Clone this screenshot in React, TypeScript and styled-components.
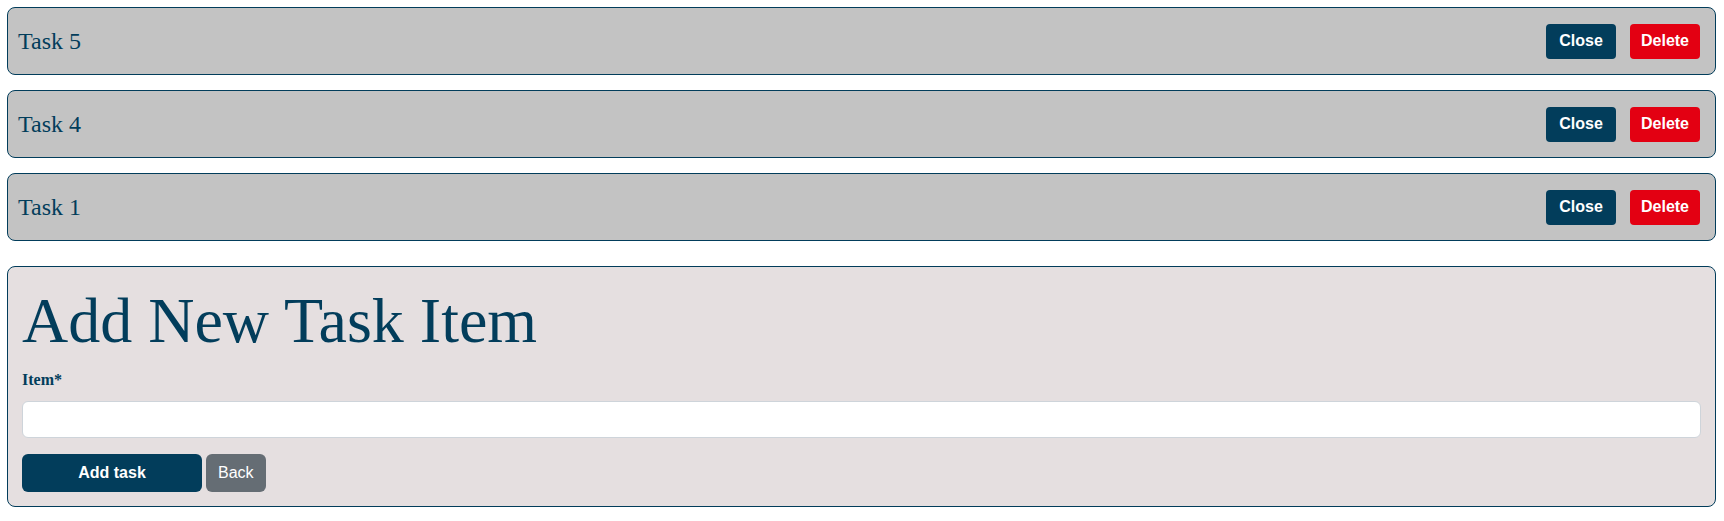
import React from 'react';
import styled, { createGlobalStyle } from 'styled-components';

const GlobalStyle = createGlobalStyle`
    body {
        margin: 0;
        background: #ffffff;
        font-family: "Liberation Serif", "Times New Roman", serif;
    }
`;

const navy = '#023d5b';

const Page = styled.div`
    padding: 7px 8px 7px 7px;
    display: flex;
    flex-flow: column nowrap;
`;

const TaskList = styled.div`
    display: flex;
    flex-flow: column nowrap;
    gap: 15px;
`;

const TaskCard = styled.div`
    height: 66px;
    box-sizing: content-box;
    display: flex;
    align-items: center;
    justify-content: space-between;
    padding: 0 15px 0 10px;
    background: #c3c3c3;
    border: 1px solid ${navy};
    border-radius: 8px;
`;

const TaskTitle = styled.span`
    font-size: 24px;
    color: ${navy};
`;

const Actions = styled.div`
    display: flex;
    gap: 14px;
`;

const SmallButton = styled.button<{ $danger?: boolean }>`
    width: 70px;
    height: 35px;
    border: none;
    border-radius: 4px;
    background: ${(p) => (p.$danger ? '#e30012' : navy)};
    color: #ffffff;
    font-family: "Liberation Sans", Arial, sans-serif;
    font-weight: 700;
    font-size: 16px;
    padding: 0;
    cursor: pointer;
`;

const FormCard = styled.form`
    margin-top: 25px;
    padding: 17px 14px 14px 14px;
    background: #e5dfe0;
    border: 1px solid ${navy};
    border-radius: 8px;
    display: flex;
    flex-flow: column nowrap;
`;

const Heading = styled.h1`
    margin: 0 0 10px 0;
    font-size: 64px;
    font-weight: 400;
    line-height: 1.15;
    color: ${navy};
`;

const Label = styled.label`
    font-size: 16px;
    font-weight: 700;
    line-height: 24px;
    color: ${navy};
    margin-bottom: 9px;
`;

const TextInput = styled.input`
    box-sizing: border-box;
    width: 100%;
    height: 37px;
    padding: 6px 12px;
    border: 1px solid #ced4da;
    border-radius: 6px;
    background: #ffffff;
    font-family: "Liberation Sans", Arial, sans-serif;
    font-size: 16px;
    outline: none;
`;

const ButtonRow = styled.div`
    display: flex;
    gap: 4px;
    margin-top: 16px;
`;

const FormButton = styled.button<{ $primary?: boolean }>`
    height: 38px;
    width: ${(p) => (p.$primary ? '180px' : 'auto')};
    padding: 0 12px;
    border: none;
    border-radius: 6px;
    background: ${(p) => (p.$primary ? navy : '#656d74')};
    color: #ffffff;
    font-family: "Liberation Sans", Arial, sans-serif;
    font-size: 16px;
    font-weight: ${(p) => (p.$primary ? 700 : 400)};
    cursor: pointer;
`;

const tasks = ['Task 5', 'Task 4', 'Task 1'];

function App() {
    const [item, setItem] = React.useState<string>('');

    return (
        <>
            <GlobalStyle />
            <Page>
                <TaskList>
                    {tasks.map((t) => (
                        <TaskCard key={t}>
                            <TaskTitle>{t}</TaskTitle>
                            <Actions>
                                <SmallButton type="button">Close</SmallButton>
                                <SmallButton type="button" $danger>Delete</SmallButton>
                            </Actions>
                        </TaskCard>
                    ))}
                </TaskList>
                <FormCard onSubmit={(e) => e.preventDefault()}>
                    <Heading>Add New Task Item</Heading>
                    <Label htmlFor="item">Item*</Label>
                    <TextInput id="item" value={item} onChange={(e) => setItem(e.target.value)} />
                    <ButtonRow>
                        <FormButton type="submit" $primary>Add task</FormButton>
                        <FormButton type="button">Back</FormButton>
                    </ButtonRow>
                </FormCard>
            </Page>
        </>
    );
}

export default App;
